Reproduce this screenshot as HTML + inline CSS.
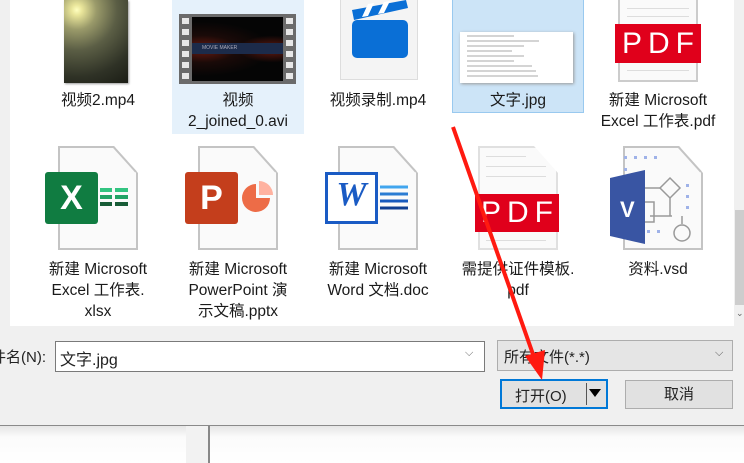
<!DOCTYPE html>
<html><head><meta charset="utf-8"><style>
*{margin:0;padding:0;box-sizing:border-box}
body{width:744px;height:463px;overflow:hidden;background:#f0f0f0;position:relative;font-family:"Liberation Sans","Noto Sans CJK SC",sans-serif;font-size:14px;color:#222}
.a{position:absolute}
.lbl{position:absolute;width:150px;text-align:center;line-height:21px;font-size:15.5px;color:#1a1a1a;white-space:nowrap}
.doc{position:absolute;width:80px;height:104px;background:#fafafa;border:2px solid #c4c4c4;clip-path:polygon(0 0,70% 0,100% 26%,100% 100%,0 100%)}
.diag{position:absolute;height:2px;background:#c4c4c4;transform-origin:0 0}
.pdf{position:absolute;background:#e0001b;color:#fff;font-size:30px;letter-spacing:6px;text-align:center;padding-left:6px}
.ln{position:absolute;height:1px;background:#ddd}
</style></head><body>
<div class="a" style="left:10px;top:0;width:724px;height:326px;background:#fff"></div>
<div class="a" style="left:734px;top:0;width:10px;height:326px;background:#f0f0f0"></div>
<div class="a" style="left:735px;top:210px;width:9px;height:95px;background:#cdcdcd"></div>
<div class="a" style="left:736px;top:308px;font-size:9px;color:#666">⌄</div>

<div class="a" style="left:172px;top:0;width:132px;height:134px;background:#e5f1fb"></div>
<div class="a" style="left:452px;top:0;width:132px;height:113px;background:#cce4f7;border:1px solid #99c9ef;border-top:none"></div>

<div class="a" style="left:64px;top:0;width:64px;height:83px;background:radial-gradient(circle at 20% 12%,#ffffc0 0,#e9e59a 6%,#9a9a6a 22%,#5b5e45 45%,#2f3226 75%,#1b1d15 100%);box-shadow:1px 1px 2px #999"></div>
<div class="lbl" style="left:23px;top:90px">视频2.mp4</div>

<div class="a" style="left:179px;top:14px;width:117px;height:70px;background:#6b6b6b"></div>
<div class="a" style="left:192px;top:17px;width:91px;height:64px;background:radial-gradient(ellipse at 12% 50%,#6a1a10 0,#1a0a08 30%,#050505 60%),#000"></div>
<div class="a" style="left:192px;top:17px;width:91px;height:64px;background:radial-gradient(ellipse at 88% 50%,#6a1a10 0,transparent 30%)"></div>
<div class="a" style="left:192px;top:43px;width:91px;height:11px;background:#1c2b4a;color:#aab;font-size:5px;line-height:11px;padding-left:10px">MOVIE MAKER</div>
<svg class="a" style="left:179px;top:14px" width="117" height="70">
<g fill="#e8e8e8"><rect x="3" y="4" width="7" height="6"/><rect x="3" y="15" width="7" height="6"/><rect x="3" y="26" width="7" height="6"/><rect x="3" y="37" width="7" height="6"/><rect x="3" y="48" width="7" height="6"/><rect x="3" y="59" width="7" height="6"/>
<rect x="107" y="4" width="7" height="6"/><rect x="107" y="15" width="7" height="6"/><rect x="107" y="26" width="7" height="6"/><rect x="107" y="37" width="7" height="6"/><rect x="107" y="48" width="7" height="6"/><rect x="107" y="59" width="7" height="6"/></g></svg>
<div class="lbl" style="left:163px;top:90px">视频<br>2_joined_0.avi</div>

<div class="a" style="left:340px;top:0;width:78px;height:80px;background:#f4f4f4;border:1px solid #ddd;border-top:none"></div>
<svg class="a" style="left:346px;top:0" width="70" height="64"><path d="M6 10 L60 0 L62 8 L8 20Z" fill="#0a6fd6"/><g fill="#fff"><path d="M16 17 L22 4 L28 3 L22 16Z"/><path d="M32 14 L38 2 L44 1 L38 13Z"/></g><rect x="6" y="20" width="56" height="38" rx="5" fill="#0a6fd6"/></svg>
<div class="lbl" style="left:303px;top:90px">视频录制.mp4</div>

<div class="a" style="left:460px;top:32px;width:113px;height:51px;background:#fff;box-shadow:1px 1px 3px #999"></div>
<svg class="a" style="left:464px;top:34px" width="100" height="48"><g stroke="#aaa" stroke-width="1"><line x1="3" y1="2" x2="50" y2="2"/><line x1="3" y1="7" x2="75" y2="7"/><line x1="3" y1="12" x2="60" y2="12"/><line x1="3" y1="17" x2="48" y2="17"/><line x1="3" y1="22" x2="60" y2="22"/><line x1="3" y1="27" x2="50" y2="27"/><line x1="3" y1="32" x2="68" y2="32"/><line x1="3" y1="37" x2="72" y2="37"/><line x1="3" y1="42" x2="74" y2="42"/></g></svg>
<div class="lbl" style="left:443px;top:90px">文字.jpg</div>

<div class="a" style="left:618px;top:0;width:80px;height:82px;background:#fafafa;border:2px solid #ccc;border-top:none"></div>
<div class="ln" style="left:627px;top:8px;width:62px"></div><div class="ln" style="left:627px;top:16px;width:62px"></div>
<div class="pdf" style="left:615px;top:24px;width:86px;height:39px;line-height:39px">PDF</div>
<div class="ln" style="left:627px;top:70px;width:62px"></div>
<div class="lbl" style="left:583px;top:90px">新建 Microsoft<br>Excel 工作表.pdf</div>

<div class="doc" style="left:58px;top:146px"></div><div class="diag" style="left:114px;top:146px;width:34px;transform:rotate(48deg)"></div>
<div class="doc" style="left:198px;top:146px"></div><div class="diag" style="left:254px;top:146px;width:34px;transform:rotate(48deg)"></div>
<div class="doc" style="left:338px;top:146px"></div><div class="diag" style="left:394px;top:146px;width:34px;transform:rotate(48deg)"></div>
<div class="doc" style="left:478px;top:146px;border-color:#e0e0e0"></div>
<div class="doc" style="left:623px;top:146px"></div><div class="diag" style="left:679px;top:146px;width:34px;transform:rotate(48deg)"></div>

<div class="a" style="left:45px;top:172px;width:53px;height:52px;background:#107c41;border-radius:3px;color:#fff;font-size:34px;font-weight:bold;text-align:center;line-height:52px">X</div>
<svg class="a" style="left:100px;top:188px" width="30" height="22"><rect x="0" y="0" width="12" height="4" fill="#33c481"/><rect x="15" y="0" width="13" height="4" fill="#33c481"/><rect x="0" y="7" width="12" height="4" fill="#21a366"/><rect x="15" y="7" width="13" height="4" fill="#21a366"/><rect x="0" y="14" width="12" height="4" fill="#185c37"/><rect x="15" y="14" width="13" height="4" fill="#185c37"/></svg>
<div class="lbl" style="left:23px;top:259px">新建 Microsoft<br>Excel 工作表.<br>xlsx</div>

<div class="a" style="left:185px;top:172px;width:53px;height:52px;background:#c43e1c;border-radius:3px;color:#fff;font-size:34px;font-weight:bold;text-align:center;line-height:52px">P</div>
<svg class="a" style="left:240px;top:181px" width="34" height="34"><path d="M16 17 L16 3 A14 14 0 1 0 30 17Z" fill="#ed6c47"/><path d="M19 14 L19 0 A14 14 0 0 1 33 14Z" fill="#ffb2a0"/></svg>
<div class="lbl" style="left:163px;top:259px">新建 Microsoft<br>PowerPoint 演<br>示文稿.pptx</div>

<div class="a" style="left:325px;top:172px;width:53px;height:52px;border:3px solid #1a5bc4;background:#fff"></div>
<div class="a" style="left:331px;top:175px;width:41px;height:40px;background:#fff;color:#1a5bc4;font-size:34px;font-weight:bold;font-style:italic;text-align:center;line-height:40px;font-family:'Liberation Serif',serif">W</div>
<svg class="a" style="left:380px;top:185px" width="30" height="28"><g stroke-width="3"><line x1="0" y1="2" x2="28" y2="2" stroke="#41a5ee"/><line x1="0" y1="9" x2="28" y2="9" stroke="#2b7cd3"/><line x1="0" y1="16" x2="28" y2="16" stroke="#185abd"/><line x1="0" y1="23" x2="28" y2="23" stroke="#103f91"/></g></svg>
<div class="lbl" style="left:303px;top:259px">新建 Microsoft<br>Word 文档.doc</div>

<div class="ln" style="left:486px;top:156px;width:40px"></div><div class="ln" style="left:486px;top:166px;width:60px"></div><div class="ln" style="left:486px;top:176px;width:60px"></div>
<div class="pdf" style="left:475px;top:194px;width:84px;height:38px;line-height:38px">PDF</div>
<div class="ln" style="left:486px;top:240px;width:60px"></div>
<div class="lbl" style="left:443px;top:259px">需提供证件模板.<br>pdf</div>

<svg class="a" style="left:610px;top:150px" width="100" height="100"><g fill="#9fb2e8"><rect x="14" y="6" width="3" height="3"/><rect x="24" y="6" width="3" height="3"/><rect x="34" y="6" width="3" height="3"/><rect x="44" y="6" width="3" height="3"/><rect x="14" y="18" width="3" height="3"/><rect x="76" y="34" width="3" height="3"/><rect x="76" y="45" width="3" height="3"/><rect x="76" y="56" width="3" height="3"/><rect x="27" y="80" width="3" height="3"/><rect x="37" y="80" width="3" height="3"/><rect x="47" y="80" width="3" height="3"/></g>
<g fill="none" stroke="#999" stroke-width="1.5"><path d="M60 28 L70 38 L60 48 L50 38Z"/><path d="M60 48 V66 M50 38 H34 M62 66 H40 M72 66 V74"/><rect x="30" y="52" width="14" height="20"/><circle cx="72" cy="83" r="8"/></g>
<path d="M0 28 L35 20 L35 94 L0 86Z" fill="#3955a3"/><text x="10" y="67" fill="#fff" font-size="22" font-weight="bold" font-family="Liberation Sans">V</text></svg>
<div class="lbl" style="left:583px;top:259px">资料.vsd</div>

<div class="a" style="left:0;top:326px;width:744px;height:100px;background:#f0f0f0"></div>
<div class="a" style="left:0;top:425px;width:744px;height:1px;background:#8a8a8a"></div>
<div class="a" style="left:0;top:426px;width:744px;height:37px;background:linear-gradient(#e6e6e6,#fbfbfb 30%,#fff)"></div>
<div class="a" style="left:186px;top:426px;width:22px;height:37px;background:#f2f2f2"></div>
<div class="a" style="left:208px;top:426px;width:2px;height:37px;background:#888"></div>

<div class="a" style="left:-9px;top:346px;font-size:15px;white-space:nowrap">件名(N):</div>
<div class="a" style="left:55px;top:341px;width:430px;height:31px;background:#fff;border:1px solid #7a7a7a;padding:4px 4px;font-size:16px">文字.jpg</div>
<div class="a" style="left:465px;top:347px;font-size:11px;color:#666">⌵</div>
<div class="a" style="left:497px;top:340px;width:236px;height:31px;background:#e5e5e5;border:1px solid #adadad;padding:5px 6px;font-size:15px">所有文件(*.*)</div>
<div class="a" style="left:715px;top:347px;font-size:11px;color:#555">⌵</div>
<div class="a" style="left:500px;top:379px;width:108px;height:30px;background:#e1e1e1;border:2px solid #0078d7"></div>
<div class="a" style="left:515px;top:385px;font-size:15px">打开(O)</div>
<div class="a" style="left:586px;top:383px;width:1px;height:22px;background:#555"></div>
<svg class="a" style="left:589px;top:389px" width="14" height="10"><path d="M0 0 H12 L6 8Z" fill="#000"/></svg>
<div class="a" style="left:625px;top:380px;width:108px;height:29px;background:#e1e1e1;border:1px solid #adadad;text-align:center;line-height:27px;font-size:15px">取消</div>

<svg class="a" style="left:0;top:0" width="744" height="463"><line x1="453" y1="127" x2="535" y2="360" stroke="#ff1a10" stroke-width="4"/><path d="M542 380 L525 356 L545 350Z" fill="#ff1a10"/></svg>
</body></html>
